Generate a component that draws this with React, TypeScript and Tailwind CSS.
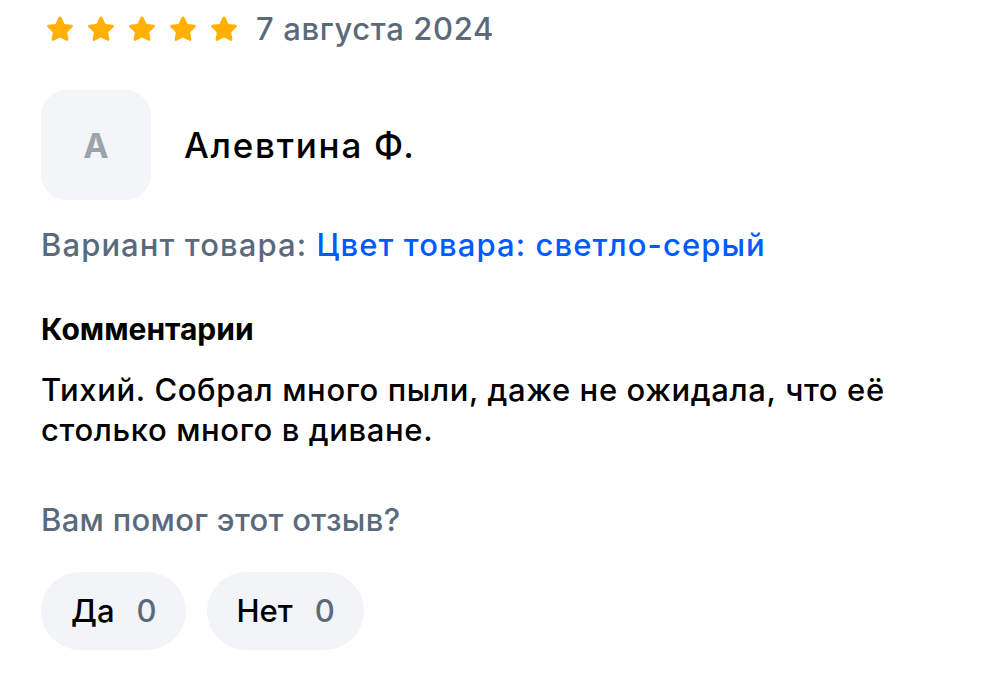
const Star = () => (
  <svg width="30" height="28" viewBox="0 0 24 23" fill="#ffb000">
    <path d="M12 1.2c.5 0 .9.3 1.1.7l2.6 5.4 5.9.8c.9.1 1.3 1.3.6 1.9l-4.3 4.1 1 5.9c.2.9-.8 1.6-1.6 1.2L12 18.4l-5.3 2.8c-.8.4-1.8-.3-1.6-1.2l1-5.9-4.3-4.1c-.7-.6-.3-1.8.6-1.9l5.9-.8 2.6-5.4c.2-.4.6-.7 1.1-.7z" />
  </svg>
);

export default function App() {
  return (
    <div className="w-[999px] h-[698px] bg-white px-[41px] pt-[13px] font-['Inter','Noto_Sans',sans-serif] font-medium text-black">
      <div className="flex items-center">
        <div className="flex gap-[11px] pl-[4px]">
          <Star />
          <Star />
          <Star />
          <Star />
          <Star />
        </div>
        <span className="ml-[17px] text-[31px] tracking-[0.02em] text-[#5b6a7b] leading-none">7 августа 2024</span>
      </div>

      <div className="flex items-center mt-[46px]">
        <div className="w-[110px] h-[110px] rounded-[26px] bg-[#f3f5f9] flex items-center justify-center text-[34px] font-bold text-[#9aa3ae]">
          А
        </div>
        <span className="ml-[33px] text-[35px] tracking-[0.05em] leading-none">Алевтина Ф.</span>
      </div>

      <div className="mt-[27px] text-[31px] tracking-[0.035em] leading-[36px]">
        <span className="text-[#5b6a7b]">Вариант товара: </span>
        <span className="text-[#005bff]">Цвет товара: светло-серый</span>
      </div>

      <div className="mt-[48px] text-[30px] font-bold leading-[36px]">Комментарии</div>
      <p className="mt-[23px] text-[31px] tracking-[0.02em] leading-[40px] max-w-[880px]">
        Тихий. Собрал много пыли, даже не ожидала, что её столько много в диване.
      </p>

      <div className="mt-[52px] text-[31px] tracking-[0.01em] leading-[36px] text-[#5b6a7b]">Вам помог этот отзыв?</div>

      <div className="flex gap-[21px] mt-[34px]">
        <button className="h-[78px] rounded-full bg-[#f2f4f8] pl-[30px] pr-[29px] flex items-center text-[31px]">
          <span>Да</span>
          <span className="ml-[22px] text-[#5b6a7b]">0</span>
        </button>
        <button className="h-[78px] rounded-full bg-[#f2f4f8] pl-[30px] pr-[29px] flex items-center text-[31px]">
          <span>Нет</span>
          <span className="ml-[22px] text-[#5b6a7b]">0</span>
        </button>
      </div>
    </div>
  );
}
